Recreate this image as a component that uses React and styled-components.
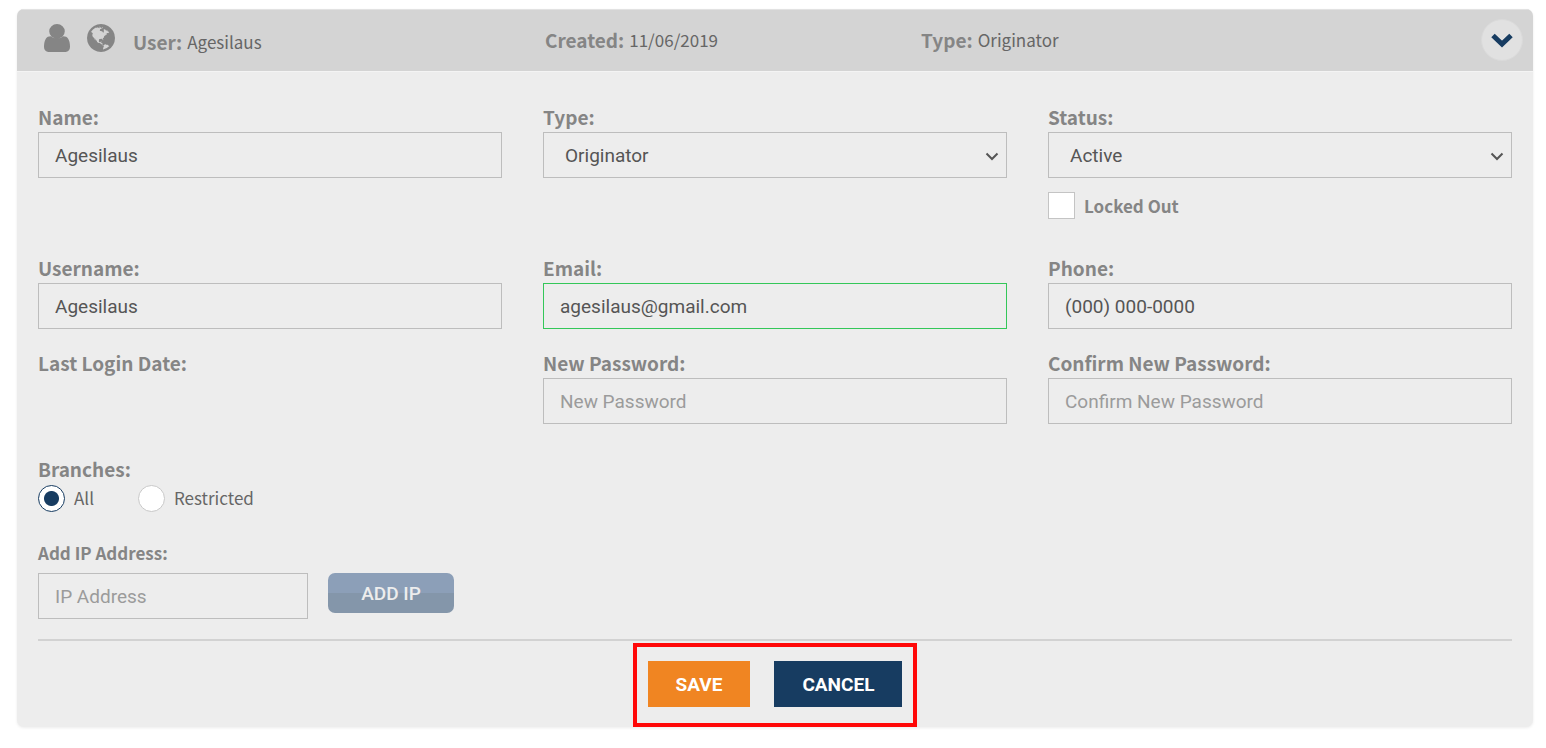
import { useState } from "react"
import styled, { createGlobalStyle } from "styled-components"

const GlobalStyle = createGlobalStyle`
    *, *::before, *::after {
        box-sizing: border-box;
    }
    body {
        margin: 0;
        background-color: #fff;
        color: #555;
        font-family: "Noto Sans CJK SC", "Open Sans", sans-serif;
    }
    input, select, button {
        margin: 0;
        font-family: Roboto, "Liberation Sans", sans-serif;
    }
`
const Page = styled.main`
    padding: 9px 13px 20px 17px;
`
const Card = styled.section`
    background-color: #ededed;
    border-radius: 7px;
    box-shadow: 0 1px 3px #00000014;
    overflow: hidden;
`
const Header = styled.header`
    display: grid;
    grid-template-columns: 528fr 376fr 612fr;
    align-items: center;
    height: 62px;
    background-color: #d4d4d4;
    border-top: 1px solid #e2e2e2;
    color: #7f7f7f;
`
const HeaderCell = styled.div`
    display: flex;
    align-items: center;
    padding-bottom: 2px;
    font-size: 17px;
    line-height: 30px;
    color: #666;

    strong {
        margin-right: 5px;
        font-size: 19px;
        color: #858585;
    }
    &:first-child {
        padding: 2px 0 0 27px;
    }
    &:last-child {
        padding-right: 10px;
    }
`
const HeaderIcon = styled.svg`
    width: ${({ $width }) => $width}px;
    height: 28px;
    margin-right: ${({ $gap }) => $gap}px;
    margin-bottom: 8px;
    fill: #858585;
`
const Toggle = styled.button`
    display: flex;
    align-items: center;
    justify-content: center;
    width: 42px;
    height: 42px;
    margin-left: auto;
    padding: 0;
    border: 1px solid #dadada;
    border-radius: 50%;
    background-color: #e1e1e1;
    cursor: pointer;
`
const Form = styled.form`
    padding: 30px 21px 0;
    border-top: 1px solid #f4f4f4;
`
const Row = styled.div`
    display: grid;
    grid-template-columns: repeat(3, 1fr);
    column-gap: 41px;
    margin-bottom: ${({ $space }) => $space}px;
`
const Field = styled.div`
    display: flex;
    flex-direction: column;
    min-width: 0;
`
const Label = styled.label`
    font-size: ${({ $small }) => ($small ? 17 : 19)}px;
    font-weight: bold;
    line-height: 30px;
    color: #858585;
`
const Input = styled.input`
    width: 100%;
    height: 46px;
    padding: 0 16px;
    border: 1px solid ${({ $valid }) => ($valid ? "#34c759" : "#bdbdbd")};
    border-radius: 0;
    background-color: transparent;
    font-size: 19px;
    color: #555;
    outline: none;

    &::placeholder {
        color: #9b9b9b;
    }
`
const SelectBox = styled.div`
    position: relative;

    svg {
        position: absolute;
        top: 18px;
        right: 8px;
        pointer-events: none;
    }
`
const Select = styled.select`
    width: 100%;
    height: 46px;
    padding: 0 21px;
    border: 1px solid #bdbdbd;
    border-radius: 0;
    background-color: transparent;
    font-size: 19px;
    color: #555;
    appearance: none;
    outline: none;
`
const CheckLabel = styled.label`
    display: flex;
    align-items: center;
    gap: 9px;
    margin-top: 14px;
    font-size: 17px;
    font-weight: bold;
    line-height: 27px;
    color: #858585;
`
const Checkbox = styled.input`
    appearance: none;
    width: 27px;
    height: 27px;
    border: 1px solid #c4c4c4;
    background-color: #fff;

    &:checked {
        background-color: #173c61;
        box-shadow: inset 0 0 0 6px #fff;
    }
`
const RadioSet = styled.fieldset`
    min-width: 0;
    margin: 0;
    padding: 0;
    border: 0;

    legend {
        padding: 0;
        font-size: 19px;
        font-weight: bold;
        line-height: 30px;
        color: #858585;
    }
`
const Radios = styled.div`
    display: flex;
    gap: 44px;

    label {
        display: flex;
        align-items: center;
        gap: 9px;
        font-size: 17px;
        line-height: 28px;
        color: #666;
    }
`
const Radio = styled.input`
    appearance: none;
    width: 27px;
    height: 27px;
    border: 1px solid #c8c8c8;
    border-radius: 50%;
    background-color: #fff;

    &:checked {
        border-color: #173c61;
        background: radial-gradient(circle, #173c61 7px, #fff 8px);
    }
`
const IpBlock = styled.div`
    display: flex;
    flex-direction: column;
    gap: 5px;
    padding: 26px 0 20px;
    border-bottom: 2px solid #d2d2d2;
`
const IpRow = styled.div`
    display: flex;
    align-items: flex-start;
    gap: 20px;

    ${Input} {
        width: 270px;
    }
`
const AddButton = styled.button`
    width: 126px;
    height: 40px;
    border: 0;
    border-radius: 7px;
    background: linear-gradient(#8c9fb8 50%, #8496aa 50%);
    font-size: 19px;
    font-weight: 500;
    color: #ededed;
`
const Actions = styled.div`
    display: flex;
    gap: 24px;
    width: fit-content;
    margin: 2px auto 0;
    padding: 14px 11px 16px;
    border: 4px solid #ff0808;
`
const Button = styled.button`
    height: 46px;
    padding: 0 28px;
    border: 0;
    background-color: ${({ $primary }) => ($primary ? "#f08522" : "#173c61")};
    font-size: 19px;
    font-weight: bold;
    color: #fff;
    cursor: pointer;
`

const UserIcon = () => (
    <HeaderIcon viewBox="0 64 1280 1472" preserveAspectRatio="none" $width={26} $gap={17} aria-hidden="true">
        <path d="M1280 1271q0 109-62.5 187t-150.5 78h-854q-88 0-150.5-78T0 1271q0-85 8.5-160.5t31.5-152 58.5-131 94-89T327 704q131 128 313 128t313-128q76 0 134.5 34.5t94 89 58.5 131 31.5 152 8.5 160.5zM1024 448q0 159-112.5 271.5T640 832 368.5 719.5 256 448t112.5-271.5T640 64t271.5 112.5T1024 448z" />
    </HeaderIcon>
)

const GlobeIcon = () => (
    <HeaderIcon viewBox="128 128 1536 1536" $width={28} $gap={18} aria-hidden="true">
        <path d="M896 128q209 0 385.500 103t279.500 279.500 103 385.500-103 385.500-279.500 279.500-385.500 103-385.500-103-279.500-279.500-103-385.500 103-385.500 279.500-279.500 385.500-103zm274 521q-2 1-9.500 9.500t-13.500 9.500q2 0 4.500-5t5-11 3.500-7q6-7 22-15 14-6 52-12 34-8 51 11-2-2 9.500-13t14.500-12q3-2 15-4.500t15-7.500l2-22q-12 1-17.500-7t-6.500-21q0 2-6 8 0-7-4.500-8t-11.500 1-9 1q-10-3-15-7.500t-8-16.500-4-15q-2-5-9.500-11t-9.500-10q-1-2-2.500-5.500t-3-6.500-4-5.500-5.500-2.500-7 5-7.500 10-4.500 5q-3-2-6-1.500t-4.500 1-4.500 3-5 3.500q-3 2-8.500 3t-8.500 2q15-5-1-11-10-4-16-3 9-4 7.500-12t-8.500-14h5q-1-4-8.500-8.500t-17.500-8.500-13-6q-8-5-34-9.500t-33-.5q-5 6-4.500 10.500t4 14 3.500 12.500q1 6-5.500 13t-6.500 12q0 7 14 15.500t10 21.500q-3 8-16 16t-16 12q-5 8-1.500 18.500t10.500 16.500q2 2 1.500 4t-3.500 4.500-5.500 4-6.500 3.500l-3 2q-11 5-20.500-6t-13.500-26q-7-25-16-30-23-8-29 1-5-13-41-26-25-9-58-4 6-1 0-15-7-15-19-12 3-6 4-17.500t1-13.500q3-13 12-23 1-1 7-8.500t9.500-13.500.5-6q35 4 50-11 5-5 11.500-17t10.500-17q9-6 14-5.500t14.500 5.500 14.500 5q14 1 15.500-11t-7.500-20q12 1 3-17-4-7-8-9-12-4-27 5-8 4 2 8-1-1-9.500 10.500t-16.500 17.500-16-5q-1-1-5.500-13.500t-9.500-13.500q-8 0-16 15 3-8-11-15t-24-8q19-12-8-27-7-4-20.500-5t-19.500 4q-5 7-5.500 11.500t5 8 10.500 5.500 11.500 4 8.500 3q14 10 8 14-2 1-8.500 3.500t-11.500 4.500-6 4q-3 4 0 14t-2 14q-5-5-9-17.500t-7-16.500q7 9-25 6l-10-1q-4 0-16 2t-20.500 1-13.500-8q-4-8 0-20 1-4 4-2-4-3-11-9.500t-10-8.500q-46 15-94 41 6 1 12-1 5-2 13-6.500t10-5.500q34-14 42-7l5-5q14 16 20 25-7-4-30-1-20 6-22 12 7 12 5 18-4-3-11.500-10t-14.500-11-15-5q-16 0-22 1-146 80-235 222 7 7 12 8 4 1 5 9t2.500 11 11.500-3q9 8 3 19 1-1 44 27 19 17 21 21 3 11-10 18-1-2-9-9t-9-4q-3 5 .5 18.500t10.500 12.500q-7 0-9.500 16t-2.500 35.500-1 23.500l2 1q-3 12 5.500 34.500t21.500 19.500q-13 3 20 43 6 8 8 9 3 2 12 7.500t15 10 10 10.500q4 5 10 22.500t14 23.500q-2 6 9.500 20t10.500 23q-1 0-2.500 1t-2.500 1q3 7 15.500 14t15.500 13q1 3 2 10t3 11 8 2q2-20-24-62-15-25-17-29-3-5-5.500-15.500t-4.500-14.500q2 0 6 1.500t8.500 3.500 7.500 4 2 3q-3 7 2 17.500t12 18.500 17 19 12 13q6 6 14 19.500t0 13.500q9 0 20 10t17 20q5 8 8 26t5 24q2 7 8.500 13.500t12.500 9.500l16 8 13 7q5 2 18.500 10.500t21.500 11.500q10 4 16 4t14.500-2.500 13.500-3.500q15-2 29 15t21 21q36 19 55 11-2 1 .5 7.500t8 15.500 9 14.500 5.500 8.500q5 6 18 15t18 15q6-4 7-9-3 8 7 20t18 10q14-3 14-32-31 15-49-18 0-1-2.500-5.500t-4-8.500-2.500-8.500 0-7.500 5-3q9 0 10-3.500t-2-12.500-4-13q-1-8-11-20t-12-15q-5 9-16 8t-16-9q0 1-1.500 5.500t-1.500 6.500q-13 0-15-1 1-3 2.500-17.500t3.500-22.500q1-4 5.500-12t7.500-14.500 4-12.500-4.500-9.500-17.500-2.500q-19 1-26 20-1 3-3 10.500t-5 11.500-9 7q-7 3-24 2t-24-5q-13-8-22.500-29t-9.500-37q0-10 2.500-26.500t3-25-5.500-24.500q3-2 9-9.500t10-10.500q2-1 4.500-1.500t4.500 0 4-1.500 3-6q-1-1-4-3-3-3-4-3 7 3 28.500-1.500t27.500 1.500q15 11 22-2 0-1-2.500-9.500t-.5-13.500q5 27 29 9 3 3 15.500 5t17.500 5q3 2 7 5.500t5.500 4.500 5-.5 8.500-6.500q10 14 12 24 11 40 19 44 7 3 11 2t4.500-9.500 0-14-1.500-12.500l-1-8v-18l-1-8q-15-3-18.500-12t1.500-18.500 15-18.500q1-1 8-3.500t15.500-6.500 12.500-8q21-19 15-35 7 0 11-9-1 0-5-3t-7.500-5-4.500-2q9-5 2-16 5-3 7.500-11t7.500-10q9 12 21 2 7-8 1-16 5-7 20.500-10.500t18.500-9.500q7 2 8-2t1-12 3-12q4-5 15-9t13-5l17-11q3-4 0-4 18 2 31-11 10-11-6-20 3-6-3-9.500t-15-5.500q3-1 11.500-.5t10.500-1.500q15-10-7-16-17-5-43 12zm-163 877q206-36 351-189-3-3-12.500-4.500t-12.500-3.500q-18-7-24-8 1-7-2.500-13t-8-9-12.500-8-11-7q-2-2-7-6t-7-5.500-7.500-4.500-8.500-2-10 1l-3 1q-3 1-5.500 2.500t-5.500 3-4 3 0 2.500q-21-17-36-22-5-1-11-5.500t-10.500-7-10-1.500-11.500 7q-5 5-6 15t-2 13q-7-5 0-17.500t2-18.500q-3-6-10.500-4.500t-12 4.500-11.500 8.500-9 6.500-8.500 5.500-8.500 7.500q-3 4-6 12t-5 11q-2-4-11.500-6.500t-9.500-5.500q2 10 4 35t5 38q7 31-12 48-27 25-29 40-4 22 12 26 0 7-8 20.500t-7 21.500q0 6 2 16z" />
    </HeaderIcon>
)

const TextField = ({ id, label, ...rest }) => (
    <Field>
        <Label htmlFor={id}>{label}</Label>
        <Input id={id} {...rest} />
    </Field>
)

const SelectField = ({ id, label, options, children }) => (
    <Field>
        <Label htmlFor={id}>{label}</Label>
        <SelectBox>
            <Select id={id} defaultValue={options[0]}>
                {options.map((option) => (
                    <option key={option}>{option}</option>
                ))}
            </Select>
            <svg width="14" height="12" viewBox="0 0 14 12" fill="none" stroke="#555" strokeWidth="2">
                <path d="M1.500 3.500 7 9l5.500-5.500" />
            </svg>
        </SelectBox>
        {children}
    </Field>
)

export default function App() {
    const [open, setOpen] = useState(true)
    const [branches, setBranches] = useState("all")

    return (
        <Page>
            <GlobalStyle />
            <Card>
                <Header>
                    <HeaderCell>
                        <UserIcon />
                        <GlobeIcon />
                        <strong>User:</strong>
                        Agesilaus
                    </HeaderCell>
                    <HeaderCell>
                        <strong>Created:</strong>
                        11/06/2019
                    </HeaderCell>
                    <HeaderCell>
                        <strong>Type:</strong>
                        Originator
                        <Toggle type="button" aria-label="Toggle details" aria-expanded={open} onClick={() => setOpen(!open)}>
                            <svg width="22" height="16" viewBox="0 0 22 16" fill="none" stroke="#173c61" strokeWidth="5">
                                <path d="M2 3.500l9 8.500 9-8.500" />
                            </svg>
                        </Toggle>
                    </HeaderCell>
                </Header>
                {open && (
                    <Form onSubmit={(e) => e.preventDefault()}>
                        <Row $space={34}>
                            <TextField id="name" label="Name:" defaultValue="Agesilaus" />
                            <SelectField id="type" label="Type:" options={["Originator", "Processor"]} />
                            <SelectField id="status" label="Status:" options={["Active", "Inactive"]}>
                                <CheckLabel>
                                    <Checkbox type="checkbox" />
                                    Locked Out
                                </CheckLabel>
                            </SelectField>
                        </Row>
                        <Row $space={19}>
                            <TextField id="username" label="Username:" defaultValue="Agesilaus" />
                            <TextField id="email" label="Email:" type="email" defaultValue="agesilaus@gmail.com" $valid />
                            <TextField id="phone" label="Phone:" type="tel" defaultValue="(000) 000-0000" />
                        </Row>
                        <Row $space={30}>
                            <Field>
                                <Label as="span">Last Login Date:</Label>
                            </Field>
                            <TextField id="password" label="New Password:" type="password" placeholder="New Password" />
                            <TextField id="confirm" label="Confirm New Password:" type="password" placeholder="Confirm New Password" />
                        </Row>
                        <RadioSet>
                            <legend>Branches:</legend>
                            <Radios>
                                <label>
                                    <Radio type="radio" name="branches" checked={branches === "all"} onChange={() => setBranches("all")} />
                                    All
                                </label>
                                <label>
                                    <Radio type="radio" name="branches" checked={branches === "restricted"} onChange={() => setBranches("restricted")} />
                                    Restricted
                                </label>
                            </Radios>
                        </RadioSet>
                        <IpBlock>
                            <Label htmlFor="ip" $small>Add IP Address:</Label>
                            <IpRow>
                                <Input id="ip" placeholder="IP Address" />
                                <AddButton type="button">ADD IP</AddButton>
                            </IpRow>
                        </IpBlock>
                        <Actions>
                            <Button type="submit" $primary>SAVE</Button>
                            <Button type="button">CANCEL</Button>
                        </Actions>
                    </Form>
                )}
            </Card>
        </Page>
    )
}
